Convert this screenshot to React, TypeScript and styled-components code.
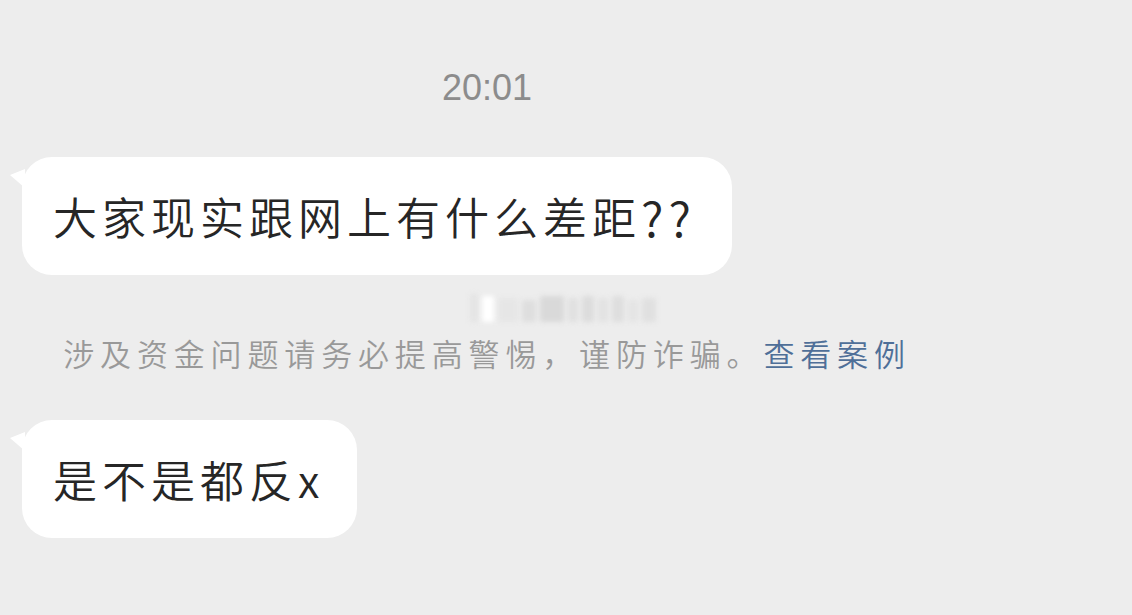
import React from 'react';
import styled, { createGlobalStyle } from 'styled-components';

const GlobalStyle = createGlobalStyle`
  html, body {
    margin: 0;
    padding: 0;
    background: #ededed;
  }
  body {
    font-family: "Noto Sans CJK SC", "Noto Sans", sans-serif;
  }
`;

const Page = styled.div`
  width: 1132px;
  height: 615px;
  background: #ededed;
  overflow: hidden;
`;

const Column = styled.div`
  width: 974px;
  display: flex;
  flex-direction: column;
`;

const Time = styled.div`
  margin-top: 68px;
  text-align: center;
  font-family: "Liberation Sans", "Noto Sans", sans-serif;
  font-size: 36px;
  line-height: 40px;
  color: #8c8c8c;
`;

const Row = styled.div<{ $top: number }>`
  display: flex;
  margin-top: ${(p) => p.$top}px;
  padding-left: 22px;
`;

const Bubble = styled.div<{ $pr: number }>`
  position: relative;
  background: #ffffff;
  border-radius: 30px;
  height: 118px;
  box-sizing: border-box;
  padding: 0 ${(p) => p.$pr}px 0 31px;
  display: flex;
  align-items: center;
  font-size: 44px;
  font-weight: 350;
  letter-spacing: 5px;
  color: #262626;
  white-space: nowrap;

  &::before {
    content: '';
    position: absolute;
    left: -12px;
    top: 12px;
    width: 0;
    height: 0;
    border-top: 6px solid transparent;
    border-bottom: 13px solid transparent;
    border-right: 15px solid #ffffff;
  }
`;

const Mark = styled.span`
  font-size: 48px;
  line-height: 1;
`;

const Blurred = styled.div`
  display: flex;
  align-items: flex-end;
  gap: 4px;
  margin: 12px 0 0 470px;
  height: 35px;
  filter: blur(2.5px);
`;

const BlurBlock = styled.div<{ $w: number; $h: number; $c: string }>`
  width: ${(p) => p.$w}px;
  height: ${(p) => p.$h}px;
  background: ${(p) => p.$c};
  border-radius: 2px;
`;

const Notice = styled.div`
  margin-top: 11px;
  text-align: center;
  font-size: 31px;
  font-weight: 350;
  line-height: 40px;
  letter-spacing: 5.85px;
  color: #999999;
  white-space: nowrap;
`;

const Link = styled.span`
  color: #4f6f98;
`;

const blocks = [
  { w: 8, h: 28, c: '#e4e4e4' },
  { w: 12, h: 26, c: '#ffffff' },
  { w: 20, h: 24, c: '#e6e6e6' },
  { w: 14, h: 22, c: '#dedede' },
  { w: 24, h: 26, c: '#d9d9d9' },
  { w: 10, h: 24, c: '#e0e0e0' },
  { w: 12, h: 26, c: '#dcdcdc' },
  { w: 10, h: 24, c: '#e2e2e2' },
  { w: 12, h: 26, c: '#dedede' },
  { w: 10, h: 22, c: '#e4e4e4' },
  { w: 14, h: 24, c: '#e0e0e0' },
];

export default function App() {
  return (
    <Page>
      <GlobalStyle />
      <Column>
        <Time>20:01</Time>
        <Row $top={49}>
          <Bubble $pr={36}>
            大家现实跟网上有什么差距<Mark>??</Mark>
          </Bubble>
        </Row>
        <Blurred>
          {blocks.map((b, i) => (
            <BlurBlock key={i} $w={b.w} $h={b.h} $c={b.c} />
          ))}
        </Blurred>
        <Notice>
          涉及资金问题请务必提高警惕，谨防诈骗。<Link>查看案例</Link>
        </Notice>
        <Row $top={47}>
          <Bubble $pr={33}>是不是都反x</Bubble>
        </Row>
      </Column>
    </Page>
  );
}
